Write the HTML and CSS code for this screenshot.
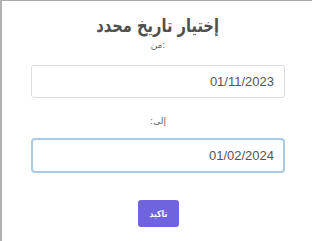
FILE: index.html
```html
<!DOCTYPE html>
<html lang="ar" dir="rtl">
<head>
  <meta charset="UTF-8">
  <title>اختيار تاريخ</title>
  <link rel="stylesheet" href="styles.css">
</head>
<body>
  <div class="modal">
    <div class="title"><span>إختيار تاريخ محدد</span></div>
    <div class="field">
      <label for="fromDate" dir="ltr">من:</label>
      <input type="text" id="fromDate" class="date-input" value="01/11/2023">
    </div>
    <div class="field">
      <label for="toDate" dir="rtl">إلى:</label>
      <input type="text" id="toDate" class="date-input focused" value="01/02/2024">
    </div>
    <div class="actions">
      <button class="btn"><span>تاكيد</span></button>
    </div>
  </div>
</body>
</html>
```

FILE: styles.css
```css
html, body {
  margin: 0;
  height: 100%;
  background: #fff;
}

body {
  font-family: "DejaVu Sans", "Liberation Sans", sans-serif;
}

.modal {
  box-sizing: border-box;
  height: 241px;
  border-top: 1px solid #a9a9a9;
  border-left: 2px solid #b0b0b0;
  padding: 10px 27px 0 29px;
  display: flex;
  flex-direction: column;
  align-items: stretch;
}

.title {
  text-align: center;
  font-size: 19px;
  font-weight: bold;
  color: #505050;
  line-height: 28px;
}

/* DejaVu's arabic runs wider than the original font */
.title span {
  display: inline-block;
  transform: scaleX(0.77);
}

.field {
  display: flex;
  flex-direction: column;
  align-items: center;
}

.field label {
  font-size: 9px;
  color: #666;
  line-height: 14px;
  margin-top: -1px;
  margin-bottom: 13px;
}

.field + .field label {
  margin-top: 16px;
  margin-bottom: 10px;
}

.date-input {
  box-sizing: border-box;
  width: 100%;
  height: 33px;
  border: 1px solid #ddd;
  border-radius: 3px;
  padding: 0 10px;
  text-align: right;
  direction: ltr;
  font-family: "Liberation Sans", Arial, sans-serif;
  font-size: 13px;
  color: #555;
  outline: none;
}

.date-input.focused {
  height: 35px;
  border: 2px solid #a9cbe8;
  border-radius: 4px;
  padding: 0 9px;
}

.actions {
  display: flex;
  justify-content: center;
  margin-top: 27px;
}

.btn {
  width: 41px;
  height: 27px;
  border: none;
  border-radius: 3px;
  background: #6f64de;
  color: #fff;
  font-family: "DejaVu Sans", sans-serif;
  font-size: 9px;
  font-weight: bold;
  padding: 0;
}

.btn span {
  display: inline-block;
  transform: scaleX(0.85);
}
```
